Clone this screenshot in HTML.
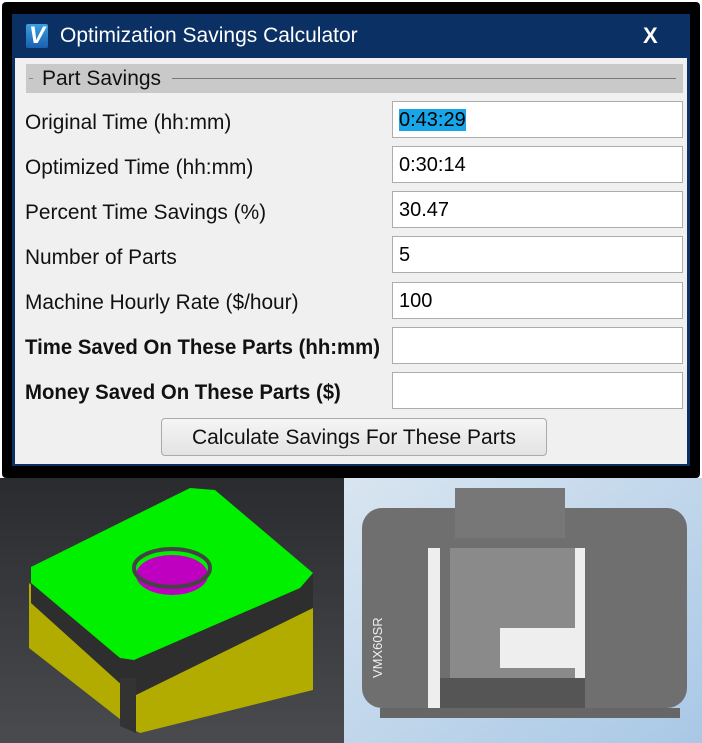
<!DOCTYPE html>
<html><head><style>
body{margin:0;width:702px;height:743px;overflow:hidden;background:#fff;font-family:"Liberation Sans",sans-serif;position:relative}
.a{position:absolute}
.lbl{position:absolute;left:25px;font-size:21.5px;color:#111;transform-origin:0 50%;transform:scaleX(0.97)}
.inp{position:absolute;left:392px;width:289px;height:35px;background:#fff;border:1px solid #adadad;font-size:20px;line-height:37px;box-sizing:content-box}
.inp span{margin-left:6px}
</style></head><body>
<div class="a" style="left:2px;top:2px;width:698px;height:476px;background:#000;border-radius:4px"></div>
<div class="a" style="left:12px;top:14px;width:678px;height:452px;background:#0b3064"></div>
<div class="a" style="left:15px;top:58px;width:672px;height:406px;background:#f0f0f0"></div>
<div class="a" style="left:26px;top:24px;width:22px;height:24px;background:linear-gradient(#3aa0e0,#1a5fae);border-radius:2px;color:#fff;font-weight:bold;font-style:italic;font-size:24px;line-height:24px;text-align:center">V</div>
<div class="a" style="left:60px;top:24px;color:#fff;font-size:21px">Optimization Savings Calculator</div>
<div class="a" style="left:643px;top:23px;color:#fff;font-size:22px;font-weight:bold">X</div>
<div class="a" style="left:26px;top:64px;width:657px;height:29px;background:#c9c9c9"></div>
<div class="a" style="left:29px;top:78px;width:4px;height:1px;background:#888"></div>
<div class="a" style="left:42px;top:67px;font-size:21px;color:#111">Part Savings</div>
<div class="a" style="left:172px;top:78px;width:504px;height:1px;background:#777"></div>
<div class="lbl" style="top:110px">Original Time (hh:mm)</div>
<div class="lbl" style="top:155px">Optimized Time (hh:mm)</div>
<div class="lbl" style="top:200px">Percent Time Savings (%)</div>
<div class="lbl" style="top:245px">Number of Parts</div>
<div class="lbl" style="top:290px">Machine Hourly Rate ($/hour)</div>
<div class="lbl" style="top:336px;font-weight:bold;font-size:21px">Time Saved On These Parts (hh:mm)</div>
<div class="lbl" style="top:381px;font-weight:bold;font-size:21px">Money Saved On These Parts ($)</div>
<div class="inp" style="top:101px"><span style="margin-left:6px;background:#19a6e8">0:43:29</span></div>
<div class="inp" style="top:146px"><span>0:30:14</span></div>
<div class="inp" style="top:191px"><span>30.47</span></div>
<div class="inp" style="top:236px"><span>5</span></div>
<div class="inp" style="top:282px"><span>100</span></div>
<div class="inp" style="top:327px"></div>
<div class="inp" style="top:372px"></div>
<div class="a" style="left:161px;top:418px;width:384px;height:36px;border:1px solid #aaa;border-radius:4px;background:linear-gradient(#f5f5f5,#e3e3e3);font-size:21px;text-align:center;line-height:38px;color:#111">Calculate Savings For These Parts</div>
<svg class="a" style="left:0;top:478px" width="702" height="265">
<defs><linearGradient id="g1" x1="0" y1="0" x2="0" y2="1"><stop offset="0" stop-color="#2a2b2e"/><stop offset="1" stop-color="#4a4b4e"/></linearGradient>
<linearGradient id="g2" x1="0" y1="0" x2="1" y2="1"><stop offset="0" stop-color="#d9e5f0"/><stop offset="1" stop-color="#a9c8e6"/></linearGradient></defs>
<rect width="344" height="265" fill="url(#g1)"/>
<rect x="344" width="358" height="265" fill="url(#g2)"/>
<polygon points="29,105 29,170 134,252 140,255 313,212 313,110 134,200" fill="#b3ac00"/>
<polygon points="31,89 31,125 134,218 313,130 313,95 134,182" fill="#2e2e2e"/>
<polygon points="120,200 136,200 136,255 120,248" fill="#333"/>
<polygon points="31,89 190,10 215,12 313,95 300,110 134,182 120,180 31,105" fill="#00f000"/>
<ellipse cx="172" cy="97" rx="36" ry="20" fill="#c000c0"/>
<ellipse cx="172" cy="90" rx="38" ry="19" fill="none" stroke="#444" stroke-width="4"/>
<rect x="362" y="30" width="325" height="200" rx="20" fill="#6f6f6f"/>
<rect x="455" y="10" width="110" height="50" fill="#777"/>
<rect x="450" y="70" width="130" height="150" fill="#8a8a8a"/>
<rect x="428" y="70" width="12" height="165" fill="#eee"/>
<rect x="575" y="70" width="10" height="165" fill="#eee"/>
<rect x="500" y="150" width="75" height="40" fill="#eee"/>
<rect x="440" y="200" width="145" height="40" fill="#555"/>
<rect x="380" y="230" width="300" height="10" fill="#666"/>
<text x="0" y="0" font-size="13" fill="#eee" transform="translate(382 200) rotate(-90)">VMX60SR</text>
</svg>
</body></html>
